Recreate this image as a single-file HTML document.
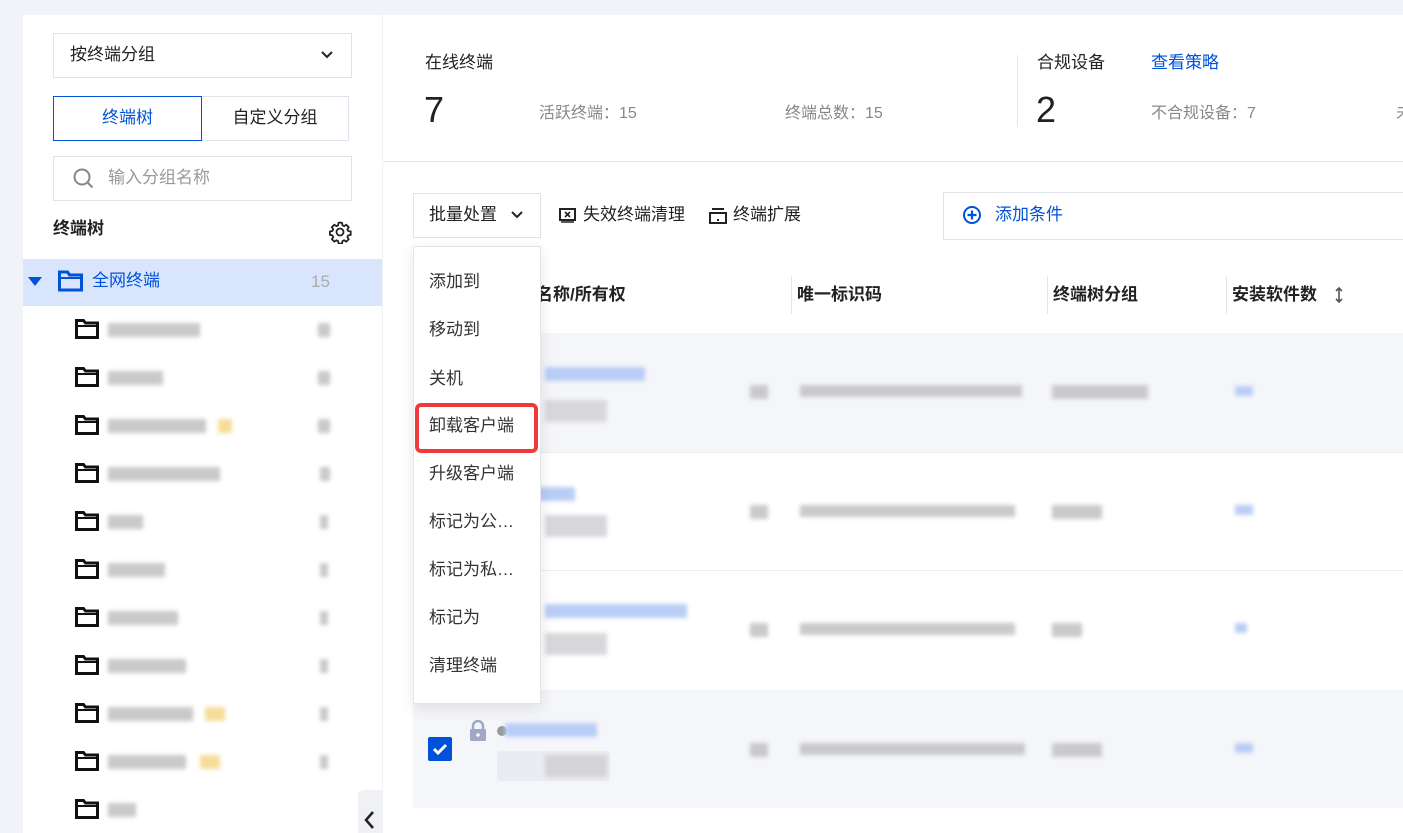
<!DOCTYPE html>
<html><head><meta charset="utf-8"><style>
*{box-sizing:border-box;margin:0;padding:0}
body{width:1403px;height:833px;background:#f2f3f8;font-family:"Liberation Sans","Noto Sans CJK SC",sans-serif;color:#222;position:relative;overflow:hidden;font-size:16px;line-height:1.1}
.abs{position:absolute}
.left{left:23px;top:15px;width:359px;height:818px;background:#fff}
.main{left:383px;top:15px;width:1020px;height:818px;background:#fff}
.box{border:1px solid #dfe2ea;background:#fff}
.blur{position:absolute;background:#c9c9cc;filter:blur(2px);height:14px}
.bb{position:absolute;background:#b9cdf6;filter:blur(2px);height:14px}
.fold{position:absolute;width:24px;height:20px}
.mi{position:absolute;left:429px;font-size:17px;color:#333}
</style></head><body>
<svg width="0" height="0" style="position:absolute"><defs><symbol id="f" viewBox="0 0 24 20"><path d="M1.5 1.5h7l2 2.5h12v14.5h-21z" stroke="#111" stroke-width="3" fill="none"/><path d="M1.5 7h21" stroke="#111" stroke-width="2"/></symbol></defs></svg>
<div class="abs left"></div>
<div class="abs main"></div>
<div class="abs box" style="left:53px;top:33px;width:299px;height:45px;"><span class="abs" style="left:16px;top:12px;font-size:17px">按终端分组</span>
<svg class="abs" style="left:266px;top:16px" width="14" height="10"><path d="M2 2l5 5 5-5" stroke="#222" stroke-width="2" fill="none"/></svg></div>
<div class="abs" style="left:53px;top:96px;width:149px;height:45px;border:1px solid #0052d9;color:#0052d9;text-align:center;line-height:41px;font-size:17px">终端树</div>
<div class="abs box" style="left:202px;top:96px;width:147px;height:45px;text-align:center;line-height:41px;font-size:17px;border-left:none">自定义分组</div>
<div class="abs box" style="left:53px;top:156px;width:299px;height:45px"><svg class="abs" style="left:18px;top:10px" width="24" height="24"><circle cx="10" cy="10" r="7.5" stroke="#888" stroke-width="2" fill="none"/><path d="M15.5 15.5l5 5" stroke="#888" stroke-width="2"/></svg><span class="abs" style="left:54px;top:12px;color:#999;font-size:17px">输入分组名称</span></div>
<div class="abs" style="left:53px;top:220px;font-weight:bold;font-size:17px">终端树</div>
<svg class="abs" style="left:328px;top:220px" width="24" height="24" viewBox="0 0 24 24"><path d="M12 2.5l2 .3.5 2.5 1.6.8 2.2-1.3 2.4 2.4-1.3 2.2.8 1.6 2.5.5v3.4l-2.5.5-.8 1.6 1.3 2.2-2.4 2.4-2.2-1.3-1.6.8-.5 2.5h-3.4l-.5-2.5-1.6-.8-2.2 1.3-2.4-2.4 1.3-2.2-.8-1.6-2.5-.5v-3.4l2.5-.5.8-1.6-1.3-2.2 2.4-2.4 2.2 1.3 1.6-.8.5-2.5z" stroke="#222" stroke-width="1.8" fill="none"/><circle cx="12" cy="12" r="3.5" stroke="#222" stroke-width="1.8" fill="none"/></svg>
<div class="abs" style="left:23px;top:259px;width:359px;height:47px;background:#d9e5fd"></div>
<svg class="abs" style="left:28px;top:277px" width="14" height="10"><path d="M0 0h14L7 9z" fill="#0052d9"/></svg>
<svg class="abs" style="left:58px;top:270px" width="25" height="22"><path d="M1.5 2h8l2 3h12v15h-22z" stroke="#0052d9" stroke-width="3" fill="none"/><path d="M1.5 8h22" stroke="#0052d9" stroke-width="2"/></svg>
<div class="abs" style="left:92px;top:272px;color:#0052d9;font-size:17px">全网终端</div>
<div class="abs" style="left:311px;top:273px;color:#aaa;font-size:17px">15</div>
<svg class="fold" style="left:75px;top:319px"><use href="#f"/></svg><div class="blur" style="left:108px;top:323px;width:92px"></div><div class="blur" style="left:318px;top:323px;width:12px"></div>
<svg class="fold" style="left:75px;top:367px"><use href="#f"/></svg><div class="blur" style="left:108px;top:371px;width:55px"></div><div class="blur" style="left:318px;top:371px;width:12px"></div>
<svg class="fold" style="left:75px;top:415px"><use href="#f"/></svg><div class="blur" style="left:108px;top:419px;width:98px"></div><div class="blur" style="left:218px;top:419px;width:14px;background:#f5dd99"></div><div class="blur" style="left:318px;top:419px;width:12px"></div>
<svg class="fold" style="left:75px;top:463px"><use href="#f"/></svg><div class="blur" style="left:108px;top:467px;width:112px"></div><div class="blur" style="left:320px;top:467px;width:10px"></div>
<svg class="fold" style="left:75px;top:511px"><use href="#f"/></svg><div class="blur" style="left:108px;top:515px;width:35px"></div><div class="blur" style="left:320px;top:515px;width:8px"></div>
<svg class="fold" style="left:75px;top:559px"><use href="#f"/></svg><div class="blur" style="left:108px;top:563px;width:57px"></div><div class="blur" style="left:320px;top:563px;width:8px"></div>
<svg class="fold" style="left:75px;top:607px"><use href="#f"/></svg><div class="blur" style="left:108px;top:611px;width:70px"></div><div class="blur" style="left:320px;top:611px;width:8px"></div>
<svg class="fold" style="left:75px;top:655px"><use href="#f"/></svg><div class="blur" style="left:108px;top:659px;width:78px"></div><div class="blur" style="left:320px;top:659px;width:8px"></div>
<svg class="fold" style="left:75px;top:703px"><use href="#f"/></svg><div class="blur" style="left:108px;top:707px;width:85px"></div><div class="blur" style="left:205px;top:707px;width:20px;background:#f5dd99"></div><div class="blur" style="left:320px;top:707px;width:8px"></div>
<svg class="fold" style="left:75px;top:751px"><use href="#f"/></svg><div class="blur" style="left:108px;top:755px;width:78px"></div><div class="blur" style="left:200px;top:755px;width:20px;background:#f5dd99"></div><div class="blur" style="left:320px;top:755px;width:8px"></div>
<svg class="fold" style="left:75px;top:799px"><use href="#f"/></svg><div class="blur" style="left:108px;top:803px;width:28px"></div>
<div class="abs" style="left:358px;top:790px;width:24px;height:43px;background:#f0f1f5;border-radius:6px 0 0 0"></div>
<svg class="abs" style="left:362px;top:810px" width="14" height="20"><path d="M11 2l-7 8 7 8" stroke="#222" stroke-width="2.5" fill="none"/></svg>
<div class="abs" style="left:425px;top:54px;font-size:17px">在线终端</div>
<div class="abs" style="left:424px;top:90px;font-size:36px">7</div>
<div class="abs" style="left:539px;top:105px;color:#888;font-size:16px">活跃终端：15</div>
<div class="abs" style="left:785px;top:105px;color:#888;font-size:16px">终端总数：15</div>
<div class="abs" style="left:1017px;top:55px;width:1px;height:72px;background:#e3e5eb"></div>
<div class="abs" style="left:1037px;top:54px;font-size:17px">合规设备</div>
<div class="abs" style="left:1151px;top:54px;font-size:17px;color:#0052d9">查看策略</div>
<div class="abs" style="left:1036px;top:90px;font-size:36px">2</div>
<div class="abs" style="left:1151px;top:105px;color:#888;font-size:16px">不合规设备：7</div>
<div class="abs" style="left:1396px;top:105px;color:#888;font-size:16px">未</div>
<div class="abs" style="left:383px;top:161px;width:1020px;height:1px;background:#e6e8ee"></div>
<div class="abs box" style="left:413px;top:193px;width:128px;height:45px"><span class="abs" style="left:15px;top:12px;font-size:17px">批量处置</span><svg class="abs" style="left:96px;top:16px" width="14" height="10"><path d="M2 2l5 5 5-5" stroke="#222" stroke-width="2" fill="none"/></svg></div>
<svg class="abs" style="left:559px;top:208px" width="18" height="16"><rect x="1" y="1" width="15" height="11" stroke="#222" stroke-width="2" fill="none"/><path d="M6 4l5 5M11 4l-5 5M2 14h13" stroke="#222" stroke-width="1.6"/></svg>
<div class="abs" style="left:583px;top:206px;font-size:17px">失效终端清理</div>
<svg class="abs" style="left:709px;top:208px" width="18" height="16"><path d="M3 1h12M1 5h16v10H1z" stroke="#222" stroke-width="2" fill="none"/><rect x="8" y="11" width="2" height="2" fill="#222"/></svg>
<div class="abs" style="left:733px;top:206px;font-size:17px">终端扩展</div>
<div class="abs box" style="left:943px;top:192px;width:470px;height:48px"></div>
<svg class="abs" style="left:962px;top:205px" width="20" height="20"><circle cx="10" cy="10" r="8" stroke="#0052d9" stroke-width="2" fill="none"/><path d="M10 5.5v9M5.5 10h9" stroke="#0052d9" stroke-width="2.2"/></svg>
<div class="abs" style="left:995px;top:206px;font-size:17px;color:#0052d9">添加条件</div>
<div class="abs" style="left:536px;top:286px;font-weight:bold;font-size:17px">名称/所有权</div>
<div class="abs" style="left:791px;top:276px;width:1px;height:38px;background:#e3e5eb"></div>
<div class="abs" style="left:797px;top:286px;font-weight:bold;font-size:17px">唯一标识码</div>
<div class="abs" style="left:1047px;top:276px;width:1px;height:38px;background:#e3e5eb"></div>
<div class="abs" style="left:1053px;top:286px;font-weight:bold;font-size:17px">终端树分组</div>
<div class="abs" style="left:1226px;top:276px;width:1px;height:38px;background:#e3e5eb"></div>
<div class="abs" style="left:1232px;top:286px;font-weight:bold;font-size:17px">安装软件数</div>
<svg class="abs" style="left:1334px;top:287px" width="10" height="16"><path d="M5 1v14M2 4l3-3 3 3M2 12l3 3 3-3" stroke="#555" stroke-width="1.6" fill="none"/></svg>
<div class="abs" style="left:413px;top:333px;width:990px;height:119px;background:#f5f6fa"></div>
<div class="abs" style="left:413px;top:452px;width:990px;height:1px;background:#eceef2"></div>
<div class="abs" style="left:413px;top:570px;width:990px;height:1px;background:#eceef2"></div>
<div class="abs" style="left:413px;top:690px;width:990px;height:118px;background:#f5f6fa"></div>
<div class="bb" style="left:545px;top:367px;width:100px"></div><div class="blur" style="left:545px;top:400px;width:62px;height:22px;background:#d8d8dc"></div><div class="blur" style="left:750px;top:385px;width:18px"></div><div class="blur" style="left:800px;top:385px;width:222px;height:12px"></div><div class="blur" style="left:1052px;top:385px;width:96px"></div><div class="bb" style="left:1235px;top:386px;width:18px;height:10px"></div>
<div class="bb" style="left:537px;top:487px;width:38px"></div><div class="blur" style="left:545px;top:515px;width:62px;height:22px;background:#d8d8dc"></div><div class="blur" style="left:750px;top:505px;width:18px"></div><div class="blur" style="left:800px;top:505px;width:215px;height:12px"></div><div class="blur" style="left:1052px;top:505px;width:50px"></div><div class="bb" style="left:1235px;top:505px;width:18px;height:10px"></div>
<div class="bb" style="left:545px;top:604px;width:142px"></div><div class="blur" style="left:545px;top:633px;width:62px;height:22px;background:#d8d8dc"></div><div class="blur" style="left:750px;top:623px;width:18px"></div><div class="blur" style="left:800px;top:623px;width:215px;height:12px"></div><div class="blur" style="left:1052px;top:623px;width:30px"></div><div class="bb" style="left:1235px;top:623px;width:12px;height:10px"></div>
<div class="abs" style="left:428px;top:737px;width:24px;height:24px;background:#0052d9;border-radius:2px"></div>
<svg class="abs" style="left:431px;top:740px" width="18" height="18"><path d="M3 9l4 4 8-8" stroke="#fff" stroke-width="3" fill="none"/></svg>
<svg class="abs" style="left:468px;top:720px" width="20" height="22"><path d="M5 9V6a5 5 0 0110 0v3" stroke="#a0a8c4" stroke-width="2.5" fill="none"/><rect x="2" y="9" width="16" height="12" rx="1.5" fill="#a0a8c4"/><circle cx="10" cy="15" r="1.8" fill="#fff"/></svg>
<div class="abs" style="left:497px;top:726px;width:10px;height:10px;border-radius:5px;background:#999"></div>
<div class="bb" style="left:505px;top:723px;width:92px"></div>
<div class="abs" style="left:497px;top:751px;width:113px;height:30px;background:#eaecf1;border-radius:3px"></div><div class="blur" style="left:545px;top:755px;width:62px;height:22px;background:#d4d4d8"></div>
<div class="blur" style="left:750px;top:743px;width:18px"></div><div class="blur" style="left:800px;top:743px;width:225px;height:12px"></div><div class="blur" style="left:1052px;top:743px;width:50px"></div><div class="bb" style="left:1235px;top:743px;width:18px;height:10px"></div>
<div class="abs" style="left:413px;top:246px;width:128px;height:458px;background:#fff;border:1px solid #e3e5eb;box-shadow:0 4px 14px rgba(0,0,0,.1)"></div>
<div class="mi" style="top:273px">添加到</div>
<div class="mi" style="top:321px">移动到</div>
<div class="mi" style="top:370px">关机</div>
<div class="abs" style="left:415px;top:403px;width:123px;height:50px;border:4px solid #ef3a3a;border-radius:6px"></div>
<div class="mi" style="top:417px">卸载客户端</div>
<div class="mi" style="top:465px">升级客户端</div>
<div class="mi" style="top:513px">标记为公…</div>
<div class="mi" style="top:561px">标记为私…</div>
<div class="mi" style="top:609px">标记为</div>
<div class="mi" style="top:657px">清理终端</div>
</body></html>
